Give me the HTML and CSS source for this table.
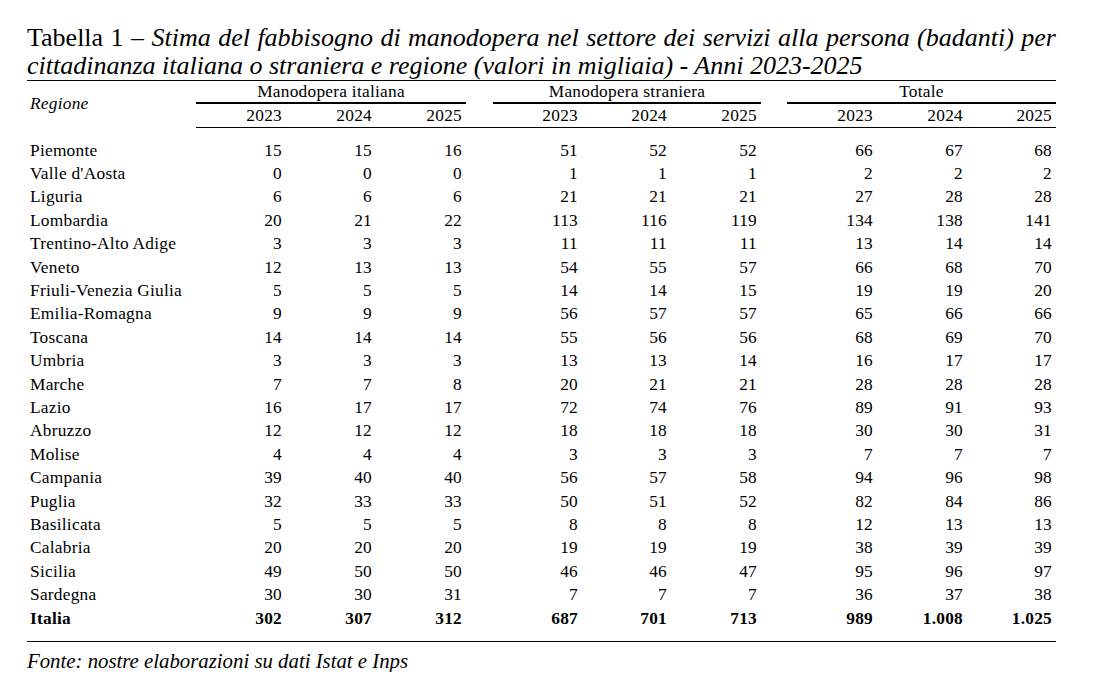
FILE: index.html
```html
<!DOCTYPE html>
<html lang="it">
<head>
<meta charset="utf-8">
<title>Tabella 1</title>
<link rel="stylesheet" href="styles.css">
</head>
<body>
<div class="page">
  <h1 class="title">Tabella 1 – <em>Stima del fabbisogno di manodopera nel settore dei servizi alla persona (badanti) per cittadinanza italiana o straniera e regione (valori in migliaia) - Anni 2023-2025</em></h1>
  <table class="data">
    <colgroup>
      <col class="c-reg">
      <col class="c-num"><col class="c-num"><col class="c-num">
      <col class="c-gap">
      <col class="c-num2"><col class="c-num2"><col class="c-num">
      <col class="c-gap2">
      <col class="c-num"><col class="c-num"><col class="c-num2">
    </colgroup>
    <thead>
      <tr class="h1">
        <th rowspan="2" class="reg-head">Regione</th>
        <th colspan="3" class="grp">Manodopera italiana</th>
        <th class="gap"></th>
        <th colspan="3" class="grp">Manodopera straniera</th>
        <th class="gap"></th>
        <th colspan="3" class="grp">Totale</th>
      </tr>
      <tr class="h2">
        <th>2023</th><th>2024</th><th>2025</th>
        <th></th>
        <th>2023</th><th>2024</th><th>2025</th>
        <th></th>
        <th>2023</th><th>2024</th><th>2025</th>
      </tr>
    </thead>
    <tbody>
      <tr class="spacer"><td colspan="12"></td></tr>
      <tr><td>Piemonte</td><td>15</td><td>15</td><td>16</td><td></td><td>51</td><td>52</td><td>52</td><td></td><td>66</td><td>67</td><td>68</td></tr>
      <tr><td>Valle d'Aosta</td><td>0</td><td>0</td><td>0</td><td></td><td>1</td><td>1</td><td>1</td><td></td><td>2</td><td>2</td><td>2</td></tr>
      <tr><td>Liguria</td><td>6</td><td>6</td><td>6</td><td></td><td>21</td><td>21</td><td>21</td><td></td><td>27</td><td>28</td><td>28</td></tr>
      <tr><td>Lombardia</td><td>20</td><td>21</td><td>22</td><td></td><td>113</td><td>116</td><td>119</td><td></td><td>134</td><td>138</td><td>141</td></tr>
      <tr><td>Trentino-Alto Adige</td><td>3</td><td>3</td><td>3</td><td></td><td>11</td><td>11</td><td>11</td><td></td><td>13</td><td>14</td><td>14</td></tr>
      <tr><td>Veneto</td><td>12</td><td>13</td><td>13</td><td></td><td>54</td><td>55</td><td>57</td><td></td><td>66</td><td>68</td><td>70</td></tr>
      <tr><td>Friuli-Venezia Giulia</td><td>5</td><td>5</td><td>5</td><td></td><td>14</td><td>14</td><td>15</td><td></td><td>19</td><td>19</td><td>20</td></tr>
      <tr><td>Emilia-Romagna</td><td>9</td><td>9</td><td>9</td><td></td><td>56</td><td>57</td><td>57</td><td></td><td>65</td><td>66</td><td>66</td></tr>
      <tr><td>Toscana</td><td>14</td><td>14</td><td>14</td><td></td><td>55</td><td>56</td><td>56</td><td></td><td>68</td><td>69</td><td>70</td></tr>
      <tr><td>Umbria</td><td>3</td><td>3</td><td>3</td><td></td><td>13</td><td>13</td><td>14</td><td></td><td>16</td><td>17</td><td>17</td></tr>
      <tr><td>Marche</td><td>7</td><td>7</td><td>8</td><td></td><td>20</td><td>21</td><td>21</td><td></td><td>28</td><td>28</td><td>28</td></tr>
      <tr><td>Lazio</td><td>16</td><td>17</td><td>17</td><td></td><td>72</td><td>74</td><td>76</td><td></td><td>89</td><td>91</td><td>93</td></tr>
      <tr><td>Abruzzo</td><td>12</td><td>12</td><td>12</td><td></td><td>18</td><td>18</td><td>18</td><td></td><td>30</td><td>30</td><td>31</td></tr>
      <tr><td>Molise</td><td>4</td><td>4</td><td>4</td><td></td><td>3</td><td>3</td><td>3</td><td></td><td>7</td><td>7</td><td>7</td></tr>
      <tr><td>Campania</td><td>39</td><td>40</td><td>40</td><td></td><td>56</td><td>57</td><td>58</td><td></td><td>94</td><td>96</td><td>98</td></tr>
      <tr><td>Puglia</td><td>32</td><td>33</td><td>33</td><td></td><td>50</td><td>51</td><td>52</td><td></td><td>82</td><td>84</td><td>86</td></tr>
      <tr><td>Basilicata</td><td>5</td><td>5</td><td>5</td><td></td><td>8</td><td>8</td><td>8</td><td></td><td>12</td><td>13</td><td>13</td></tr>
      <tr><td>Calabria</td><td>20</td><td>20</td><td>20</td><td></td><td>19</td><td>19</td><td>19</td><td></td><td>38</td><td>39</td><td>39</td></tr>
      <tr><td>Sicilia</td><td>49</td><td>50</td><td>50</td><td></td><td>46</td><td>46</td><td>47</td><td></td><td>95</td><td>96</td><td>97</td></tr>
      <tr><td>Sardegna</td><td>30</td><td>30</td><td>31</td><td></td><td>7</td><td>7</td><td>7</td><td></td><td>36</td><td>37</td><td>38</td></tr>
      <tr class="total"><td>Italia</td><td>302</td><td>307</td><td>312</td><td></td><td>687</td><td>701</td><td>713</td><td></td><td>989</td><td>1.008</td><td>1.025</td></tr>
      <tr class="spacer end"><td colspan="12"></td></tr>
    </tbody>
  </table>
  <p class="source">Fonte: nostre elaborazioni su dati Istat e Inps</p>
</div>
</body>
</html>
```
FILE: styles.css
```css
html, body {
  margin: 0;
  padding: 0;
  background: #ffffff;
}

body {
  font-family: "Liberation Serif", "Times New Roman", Times, serif;
  color: #000000;
}

.page {
  width: 1029px;
  padding: 24px 0 0 27px;
}

.title {
  margin: 0;
  font-size: 26px;
  font-weight: normal;
  line-height: 28px;
  text-align: justify;
}

.title em {
  font-style: italic;
}

.data {
  width: 1029px;
  border-collapse: collapse;
  table-layout: fixed;
  font-size: 17.33px;
  letter-spacing: 0.25px;
  border-top: 1px solid #000;
}

.c-reg { width: 169px; }
.c-num { width: 90px; }
.c-num2 { width: 89px; }
.c-gap { width: 27px; }
.c-gap2 { width: 26px; }

.data th,
.data td {
  padding: 0 4px 0 0;
  font-weight: normal;
  text-align: right;
  white-space: nowrap;
}

.data td:first-child {
  text-align: left;
  padding-left: 3px;
}

.h1 th {
  height: 21px;
  text-align: center;
  padding: 0;
}

.h1 .grp {
  border-bottom: 2px solid #000;
}

.h1 .reg-head {
  text-align: left;
  padding-left: 3px;
  font-style: italic;
  vertical-align: middle;
}

.h2 th {
  height: 23px;
  border-bottom: 1px solid #000;
}

.data tbody td {
  height: 23.4px;
  line-height: 20px;
}

.data tr.spacer td {
  height: 11px;
  line-height: 0;
  padding: 0;
}

.data tr.spacer.end td {
  border-bottom: 1px solid #000;
}

.total td {
  font-weight: bold;
}

.source {
  margin: 8px 0 0 0;
  font-size: 20.8px;
  font-style: italic;
  line-height: 22px;
}
```
